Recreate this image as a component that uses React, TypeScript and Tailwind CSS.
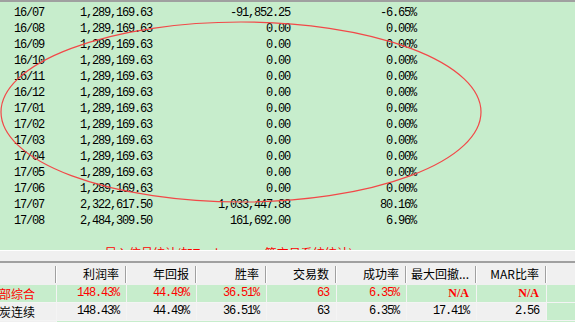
import React from 'react';

interface MonthRow {
  month: string;
  equity: string;
  profit: string;
  rate: string;
}

const months: MonthRow[] = [
  { month: '16/07', equity: '1,289,169.63', profit: '-91,852.25', rate: '-6.65%' },
  ...['16/08', '16/09', '16/10', '16/11', '16/12', '17/01', '17/02', '17/03', '17/04', '17/05', '17/06'].map((m) => ({
    month: m,
    equity: '1,289,169.63',
    profit: '0.00',
    rate: '0.00%',
  })),
  { month: '17/07', equity: '2,322,617.50', profit: '1,033,447.88', rate: '80.16%' },
  { month: '17/08', equity: '2,484,309.50', profit: '161,692.00', rate: '6.96%' },
];

const headers = ['利润率', '年回报', '胜率', '交易数', '成功率', '最大回撤...', 'MAR比率'];

const summary = [
  { name: '全部综合', red: true, values: ['148.43%', '44.49%', '36.51%', '63', '6.35%', 'N/A', 'N/A'] },
  { name: '焦炭连续', red: false, values: ['148.43%', '44.49%', '36.51%', '63', '6.35%', '17.41%', '2.56'] },
];

const mono = "font-['Liberation_Mono',monospace] text-[12px] tracking-[-1.2px]";
const cjk = "font-['Noto_Sans_CJK_SC',sans-serif] text-[12px]";
const na = "font-['Liberation_Serif',serif] text-[12px] font-bold";

export default function App() {
  return (
    <div className="w-[575px] h-[322px] overflow-hidden bg-[#f0f0f0] text-black">
      {/* monthly table */}
      <div className="relative bg-[#c7edcc] border-t-2 border-[#a0a0a0] pt-[3px]">
        {months.map((r) => (
          <div key={r.month} className={`flex h-4 leading-4 whitespace-nowrap ${mono}`}>
            <span className="w-[80px] pl-[14px]">{r.month}</span>
            <span className="w-[71px] text-right">{r.equity}</span>
            <span className="w-[139px] text-right">{r.profit}</span>
            <span className="w-[126px] text-right">{r.rate}</span>
          </div>
        ))}
        <div className="h-[21px] overflow-hidden">
          <div className={`pt-[16px] pl-[105px] leading-4 whitespace-nowrap text-[#ff0000] ${cjk}`}>
            导入信号统计(加Tradeeeeeee笔交易系统统计)
          </div>
        </div>
        <svg className="absolute left-0 top-0 pointer-events-none" width="575" height="230">
          <ellipse cx="241" cy="110" rx="240" ry="90" fill="none" stroke="#f24848" strokeWidth="1.2" />
        </svg>
      </div>

      {/* summary grid */}
      <div className="h-[11px] border-t border-white" />
      <div className="border-t-2 border-[#a0a0a0]">
        <div className={`flex h-[22px] items-center ${cjk}`}>
          <div className="w-[57px] h-full flex justify-end items-center">
            <span className="w-[2px] h-[17px] border-l border-[#a0a0a0] border-r border-r-white" />
          </div>
          {headers.map((h) => (
            <div key={h} className="w-[70px] h-full flex justify-end items-center">
              <span className="pr-[6px] whitespace-nowrap">{h}</span>
              <span className="w-[2px] h-[17px] border-l border-[#a0a0a0] border-r border-r-white" />
            </div>
          ))}
        </div>
        {summary.map((row) => (
          <div key={row.name} className="flex h-[18px] border-b border-[#f4f4f4]">
            <div
              className={`w-[57px] overflow-hidden whitespace-nowrap leading-[17px] border-r border-[#f4f4f4] ${cjk} ${
                row.red ? 'bg-[#c7edcc] text-[#ff0000]' : 'bg-[#f0f0f0]'
              }`}
            >
              <span className="ml-[-13px]">{row.name}</span>
            </div>
            {row.values.map((v, i) => (
              <div
                key={i}
                className={`w-[70px] text-right pr-[7px] leading-[17px] border-r border-[#f4f4f4] ${
                  v === 'N/A' ? na : mono
                } ${row.red ? 'bg-[#c7edcc] text-[#ff0000]' : 'bg-[#f0f0f0]'}`}
              >
                {v}
              </div>
            ))}
            <div className="flex-1 bg-[#c7edcc]" />
          </div>
        ))}
        <div className="flex h-4">
          <div className="w-[57px] bg-[#f0f0f0] border-r border-[#f4f4f4]" />
          <div className="flex-1 bg-[#c7edcc]" />
        </div>
      </div>
    </div>
  );
}
